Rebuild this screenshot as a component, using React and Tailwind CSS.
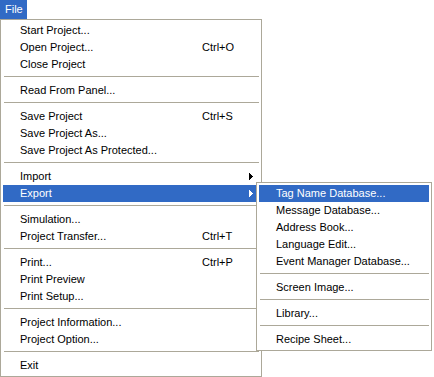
import React from "react";

const Arrow = ({ white }) => (
  <svg width="4" height="7" viewBox="0 0 4 7" className="block" shapeRendering="crispEdges">
    <g fill={white ? "#ffffff" : "#000000"}>
      <rect x="0" y="0" width="1" height="7" />
      <rect x="1" y="1" width="1" height="5" />
      <rect x="2" y="2" width="1" height="3" />
      <rect x="3" y="3" width="1" height="1" />
    </g>
  </svg>
);

const Item = ({ label, shortcut, arrow, active }) => (
  <div
    className={
      "flex items-center h-[17px] pl-[17px] pr-[6px] leading-[17px] whitespace-nowrap " +
      (active ? "bg-[#316AC5] text-white" : "text-black")
    }
  >
    <span className="w-[182px] shrink-0">{label}</span>
    <span className="flex-1">{shortcut}</span>
    {arrow && <Arrow white={active} />}
  </div>
);

const Sep = () => (
  <div className="h-[9px] pt-[3px] pl-[1px]">
    <div className="h-[1px] bg-[#ACA899]" />
  </div>
);

const SubItem = ({ label, active }) => (
  <div
    className={
      "h-[17px] pl-[17px] leading-[17px] whitespace-nowrap " +
      (active ? "bg-[#316AC5] text-white" : "text-black")
    }
  >
    {label}
  </div>
);

export default function App() {
  return (
    <div
      className="relative w-[434px] h-[377px] bg-white text-[11px] overflow-hidden"
      style={{ fontFamily: '"Liberation Sans", Arial, sans-serif' }}
    >
      <div className="flex h-[19px]">
        <div className="w-[27px] h-[19px] bg-[#316AC5] text-white pl-[5px] leading-[18px]">File</div>
      </div>
      <div className="w-[262px] h-[358px] border border-[#ACA899] bg-white p-[2px]">
        <Item label="Start Project..." />
        <Item label="Open Project..." shortcut="Ctrl+O" />
        <Item label="Close Project" />
        <Sep />
        <Item label="Read From Panel..." />
        <Sep />
        <Item label="Save Project" shortcut="Ctrl+S" />
        <Item label="Save Project As..." />
        <Item label="Save Project As Protected..." />
        <Sep />
        <Item label="Import" arrow />
        <Item label="Export" arrow active />
        <Sep />
        <Item label="Simulation..." />
        <Item label="Project Transfer..." shortcut="Ctrl+T" />
        <Sep />
        <Item label="Print..." shortcut="Ctrl+P" />
        <Item label="Print Preview" />
        <Item label="Print Setup..." />
        <Sep />
        <Item label="Project Information..." />
        <Item label="Project Option..." />
        <Sep />
        <Item label="Exit" />
      </div>

      <div className="absolute left-[256px] top-[182px] w-[176px] border border-[#ACA899] bg-white p-[2px]">
        <SubItem label="Tag Name Database..." active />
        <SubItem label="Message Database..." />
        <SubItem label="Address Book..." />
        <SubItem label="Language Edit..." />
        <SubItem label="Event Manager Database..." />
        <Sep />
        <SubItem label="Screen Image..." />
        <Sep />
        <SubItem label="Library..." />
        <Sep />
        <SubItem label="Recipe Sheet..." />
      </div>
    </div>
  );
}
